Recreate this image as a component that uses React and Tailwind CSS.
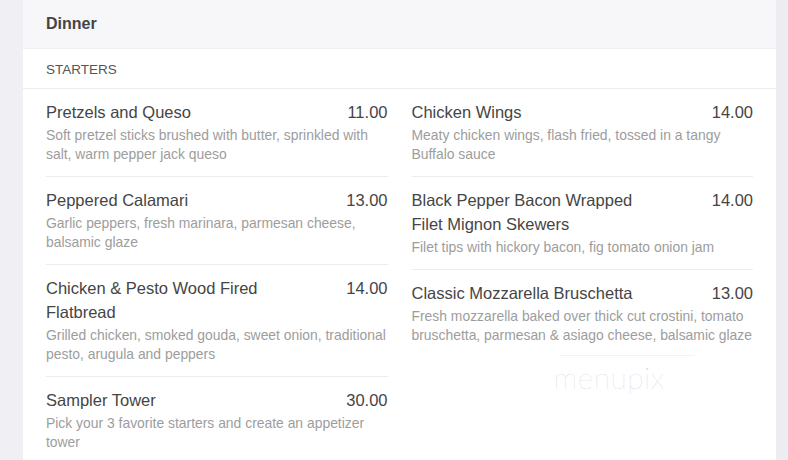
import React from "react";

const left = [
  { t: "Pretzels and Queso", p: "11.00", d: "Soft pretzel sticks brushed with butter, sprinkled with salt, warm pepper jack queso" },
  { t: "Peppered Calamari", p: "13.00", d: "Garlic peppers, fresh marinara, parmesan cheese, balsamic glaze" },
  { t: "Chicken & Pesto Wood Fired Flatbread", p: "14.00", d: "Grilled chicken, smoked gouda, sweet onion, traditional pesto, arugula and peppers" },
  { t: "Sampler Tower", p: "30.00", d: "Pick your 3 favorite starters and create an appetizer tower" },
];
const right = [
  { t: "Chicken Wings", p: "14.00", d: "Meaty chicken wings, flash fried, tossed in a tangy Buffalo sauce" },
  { t: "Black Pepper Bacon Wrapped Filet Mignon Skewers", p: "14.00", d: "Filet tips with hickory bacon, fig tomato onion jam" },
  { t: "Classic Mozzarella Bruschetta", p: "13.00", d: "Fresh mozzarella baked over thick cut crostini, tomato bruschetta, parmesan & asiago cheese, balsamic glaze" },
];

function Item({ it, last }) {
  return (
    <div className={`pt-[11px] pb-[12px] ${last ? "" : "border-b border-[#ececec]"}`}>
      <div className="flex justify-between gap-4">
        <div className="max-w-[245px] text-[16.5px] leading-[24px] text-[#454545]">{it.t}</div>
        <div className="text-[16.5px] leading-[24px] text-[#454545] shrink-0">{it.p}</div>
      </div>
      <div className="mt-[2px] text-[13.9px] leading-[19px] text-[#9d9d9d]">{it.d}</div>
    </div>
  );
}

export default function App() {
  return (
    <div className="w-[788px] h-[460px] overflow-hidden bg-[#efeff4] flex" style={{ fontFamily: '"Liberation Sans", Arial, sans-serif' }}>
      <div className="ml-[23px] w-[753px] h-full bg-white flex flex-col">
        <div className="shrink-0 h-[49px] bg-[#f7f7fa] border-b border-[#f0f0f4] px-[23px] flex items-center">
          <div className="text-[16px] font-bold text-[#444] -mt-[1px]">Dinner</div>
        </div>
        <div className="shrink-0 h-[40px] border-b border-[#ececec] px-[23px] pt-[3px] flex items-center">
          <div className="text-[13.5px] text-[#555]">STARTERS</div>
        </div>
        <div className="px-[23px] grid grid-cols-2 gap-x-[24px]">
          <div>
            {left.map((it, i) => (
              <Item key={i} it={it} last={i === left.length - 1} />
            ))}
          </div>
          <div>
            {right.map((it, i) => (
              <Item key={i} it={it} last={i === right.length - 1} />
            ))}
            <div className="mt-[-2px] ml-[148px] h-px w-[135px] bg-[#f2f2f2]" />
            <div className="mt-[4px] ml-[142px] text-[30px] leading-[34px] text-[#d4d4d4] tracking-[0.5px]" style={{ fontFamily: 'Lato, sans-serif', fontWeight: 100 }}>menupix</div>
          </div>
        </div>
      </div>
      <div className="w-[12px] h-full bg-[#ececf1]" />
    </div>
  );
}
